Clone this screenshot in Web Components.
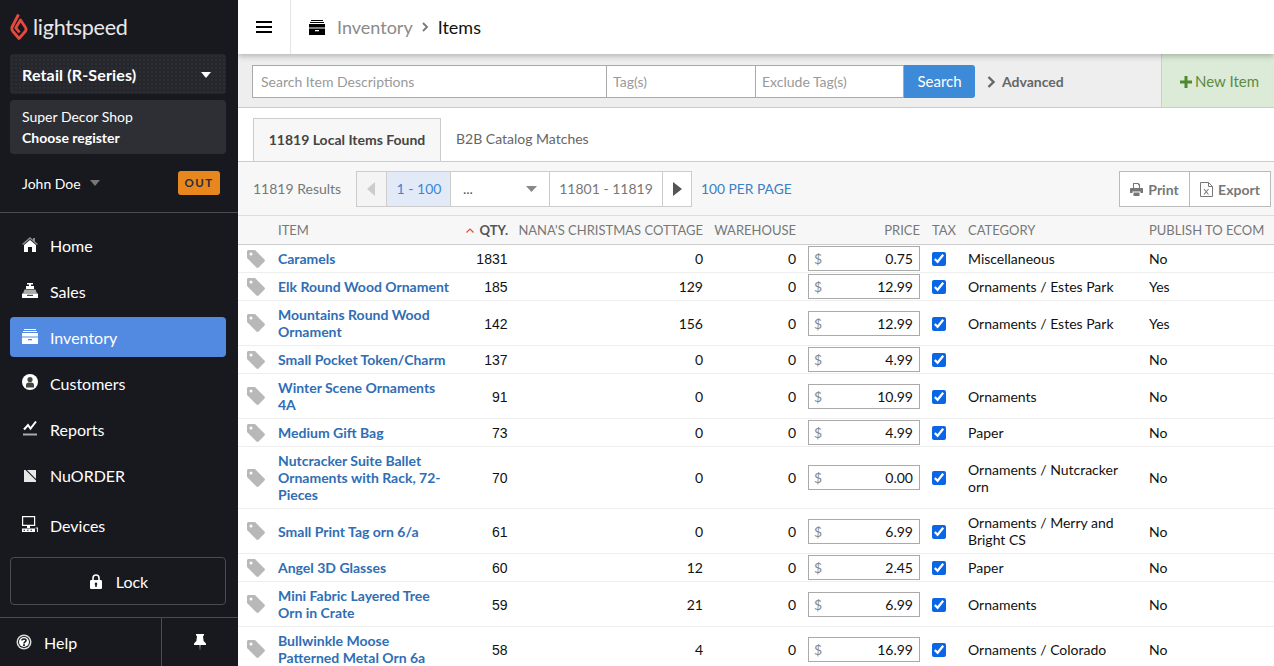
<!DOCTYPE html>
<html lang="en"><head><meta charset="utf-8"><title>Items</title>
<style>
html,body{margin:0;height:666px;overflow:hidden;background:#fff}
body{display:flex;font:14px/17px Lato,"Noto Sans",sans-serif;color:#222}
</style></head><body>
<ls-sidebar></ls-sidebar>
<ls-main></ls-main>
<script>
const I={
home:'<svg width="16" height="15" viewBox="0 0 16 15"><path fill="#8a8a8a" d="M8 0 0 7l1 1 7-6 7 6 1-1-3-2.6V1h-2v1.7z"/><path fill="#fff" d="M8 3 2 8v7h4v-5h4v5h4V8z"/></svg>',
sales:'<svg width="16" height="15" viewBox="0 0 16 15"><path fill="#fff" d="M5 0h6v1.5H9V3h3v3H4V3h3V1.5H5z"/><path fill="#aaa" d="M2.5 6.500h11l1.500 4H1z"/><path fill="#fff" d="M0 10.500h16V15H0z"/><path fill="#18191e" d="M5 11.800h6v1H5z"/></svg>',
inv:'<svg width="16" height="15" viewBox="0 0 16 15"><path fill="currentColor" d="M2 0h12v1H2zM1 2h14v1H1zM0 4h16v3.500H0zM0 8.500h16V15H0z"/><path fill="var(--k,#528ae2)" d="M6 10h4v1.300H6z"/></svg>',
cust:'<svg width="16" height="16" viewBox="0 0 16 16"><circle cx="8" cy="8" r="8" fill="#fff"/><circle cx="8" cy="5.500" r="2.600" fill="#444"/><path fill="#444" d="M4 13.500v-2.500c0-1.500 1.200-2.500 2.500-2.500h3c1.300 0 2.500 1 2.500 2.500v2.500z"/></svg>',
rep:'<svg width="14" height="16" viewBox="0 0 14 16"><path fill="none" stroke="#fff" stroke-width="2" d="M1 9.500 5 5l2.500 3.500L13 1.500"/><path fill="#aaa" d="M0 13.500h14V15.500H0z"/></svg>',
nu:'<svg width="12" height="12" viewBox="0 0 12 12"><path fill="#e8e8e8" d="M0 0h12v12H0z"/><path fill="#18191e" d="M1.500 0H3L12 9v1.500z"/></svg>',
dev:'<svg width="16" height="16" viewBox="0 0 16 16"><path fill="none" stroke="#fff" stroke-width="1.200" d="M.6.600h12v8.800H.6z"/><path fill="#fff" d="M5 10h3v2H5zM0 12.500h13V16H0z"/><path fill="#18191e" d="M1.500 13.800h1.500v1H1.500zM5 13.800h1.500v1H5zM8.500 13.800H10v1H8.500z"/><path fill="none" stroke="#ddd" stroke-width="1.200" d="M13.500 12h2v4"/></svg>',
lock:'<svg width="12" height="15" viewBox="0 0 12 15"><path fill="none" stroke="#fff" stroke-width="1.600" d="M3 7V4a3 3 0 0 1 6 0v3"/><rect y="6" width="12" height="9" rx="1.200" fill="#fff"/><path fill="#18191e" d="M6 8.500a1.300 1.300 0 0 1 .7 2.400l.4 1.800H4.900l.4-1.800A1.300 1.300 0 0 1 6 8.500z"/></svg>',
help:'<svg width="16" height="16" viewBox="0 0 16 16"><circle cx="8" cy="8" r="7.500" fill="#ddd"/><circle cx="8" cy="8" r="6" fill="#18191e"/><circle cx="8" cy="8" r="5" fill="#fff"/><path fill="none" stroke="#18191e" stroke-width="1.600" d="M6 6.500C6 4.500 10 4.500 10 6.500 10 8 8 7.800 8 9.500"/><path fill="#18191e" d="M7.100 10.300h1.800v1.700H7.100z"/></svg>',
pin:'<svg width="12" height="17" viewBox="0 0 12 17"><path fill="#fff" d="M2 0h8v1.500L9 2l.6 5L12 9.500V11H0V9.500L2.400 7 3 2 2 1.500z"/><path fill="#999" d="M5.300 11h1.400L6 17z"/></svg>',
tag:'<svg width="18" height="18" viewBox="0 0 18 18"><path fill="#b8b8b8" d="M0 1.500C0 .7.700 0 1.500 0H8l9.500 9.500c.6.600.6 1.500 0 2.100L11.600 17.500c-.6.600-1.500.6-2.100 0L0 8zM4 2.500a1.500 1.500 0 1 0 0 3 1.500 1.500 0 0 0 0-3z"/></svg>',
print:'<svg width="13" height="13" viewBox="0 0 13 13"><path fill="#777" d="M3 0h5.500L10 1.500V5H9V2.300H8V1H4v4H3zM0 6c0-.6.500-1 1-1h11c.6 0 1 .4 1 1v4h-2.500v-1.500h-8V10H0zM3.500 9.500h6V13h-6z"/></svg>',
xls:'<svg width="13" height="15" viewBox="0 0 13 15"><path fill="none" stroke="#777" d="M.5.500h8l4 4v10H.5zM8.500.500v4h4"/><path fill="none" stroke="#777" stroke-width="1.100" d="M4 7l4.500 5.500M8.500 7 4 12.500"/></svg>'
};
function def(name,css,html,extra){
  customElements.define(name,class extends HTMLElement{
    constructor(){super();this.attachShadow({mode:'open'});}
    connectedCallback(){
      if(this._done)return;this._done=true;
      this.shadowRoot.innerHTML='<style>'+css+'</style>'+(typeof html==='function'?html(this):html);
      if(extra)extra(this);
    }
  });
}
def('ls-nav-item',`:host{display:flex;align-items:center;height:40px;margin:3px 12px 3px 10px;padding-left:12px;border-radius:4px;color:#fff;font-size:16px;--k:#18191e}
:host([active]){background:#528ae2;--k:#528ae2}
.i{width:16px;display:flex;justify-content:center;margin-right:12px;color:#fff}`,
`<span class="i"><slot name="icon"></slot></span><slot></slot>`);
def('ls-sidebar',`:host{display:flex;flex-direction:column;flex:none;width:238px;height:666px;background:#18191e;color:#fff;box-sizing:border-box}
.logo{display:flex;align-items:center;height:54px;padding-left:10px;gap:5px;font-size:21.500px;letter-spacing:-.25px;color:#e9e9e9;box-sizing:border-box}
.ret{margin:0 12px 0 10px;height:40px;background:#26272c radial-gradient(circle,rgba(255,255,255,.07) .6px,transparent .8px) 0 0/4px 4px;border-radius:4px;display:flex;align-items:center;justify-content:space-between;padding:1px 15px 0 12px;font-weight:700;font-size:16px;letter-spacing:.15px;box-sizing:border-box}
.ret i{width:0;height:0;border:5.500px solid transparent;border-top:6px solid #fff;border-bottom:0}
.reg{margin:6px 12px 0 10px;height:54px;background:#2e2f35;border-radius:4px;padding:6px 12px;box-sizing:border-box;font-size:14px;line-height:21px}
.reg b{font-weight:700;display:block}
.user{display:flex;align-items:center;height:58px;padding:0 18px 0 22px;font-size:14px;border-bottom:1px solid #4a4c55}
.user i{width:0;height:0;border:5px solid transparent;border-top:6px solid #777;border-bottom:0;margin-left:9px}
.out{margin-left:auto;background:#e8871e;color:#2c2c33;font-size:11.500px;font-weight:700;letter-spacing:1.500px;width:42px;height:24px;line-height:24px;text-align:center;border-radius:3px}
nav{padding-top:9px;display:flex;flex-direction:column;flex:1}
.lock{margin:8px 12px 0 10px;height:48px;border:1px solid #4a4c55;border-radius:4px;display:flex;align-items:center;justify-content:center;gap:14px;font-size:16px;box-sizing:border-box;padding-left:2px}
.foot{display:flex;height:49px;margin-top:12px;border-top:1px solid #4a4c55;box-sizing:border-box;font-size:16px}
.foot div{display:flex;align-items:center}
.help{width:162px;padding-left:16px;gap:12px;box-sizing:border-box;border-right:1px solid #4a4c55}
.pin{flex:1;justify-content:center}
.dv{margin-top:7px}`,
`<div class="logo"><svg width="18" height="28" viewBox="0 0 18 28"><path fill="none" stroke="#e8493f" stroke-width="2.800" stroke-linejoin="round" d="M8.500 1.500 2.300 13.500Q1 16 3 18.500L9 25.500 15 18.800Q17 16.300 15.200 14L10.500 7 5.800 14.800 9.500 19.500"/></svg><span>lightspeed</span></div>
<div class="ret">Retail (R-Series)<i></i></div>
<div class="reg">Super Decor Shop<b>Choose register</b></div>
<div class="user">John Doe<i></i><span class="out">OUT</span></div>
<nav>
<ls-nav-item><span slot="icon">${I.home}</span>Home</ls-nav-item>
<ls-nav-item><span slot="icon">${I.sales}</span>Sales</ls-nav-item>
<ls-nav-item active><span slot="icon">${I.inv}</span>Inventory</ls-nav-item>
<ls-nav-item><span slot="icon">${I.cust}</span>Customers</ls-nav-item>
<ls-nav-item><span slot="icon">${I.rep}</span>Reports</ls-nav-item>
<ls-nav-item><span slot="icon">${I.nu}</span>NuORDER</ls-nav-item>
<ls-nav-item class="dv"><span slot="icon">${I.dev}</span>Devices</ls-nav-item>
</nav>
<div class="lock">${I.lock}<span>Lock</span></div>
<div class="foot"><div class="help">${I.help}<span>Help</span></div><div class="pin">${I.pin}</div></div>`);
def('ls-topbar',`:host{display:flex;align-items:center;height:54px;background:#fff;box-shadow:0 2px 6px rgba(0,0,0,.25);position:relative;z-index:2;font-size:18px;color:#8a8a8a;flex:none}
.b{width:52px;height:54px;border-right:1px solid #e4e4e4;display:flex;align-items:center;justify-content:center;color:#000}
.c{display:flex;align-items:center;padding-left:18px;color:#000;--k:#fff}
.t{margin-left:12px}.s{margin:0 9px;display:flex}.e{color:#111}`,
`<div class="b"><svg width="16" height="12" viewBox="0 0 16 12"><path fill="#000" d="M0 0h16v2H0zM0 5h16v2H0zM0 10h16v2H0z"/></svg></div>
<div class="c"><span style="display:flex">${I.inv}</span><span class="t" style="color:#8a8a8a">Inventory</span>
<span class="s"><svg width="7" height="10" viewBox="0 0 7 10"><path fill="none" stroke="#777" stroke-width="1.800" d="M1 1l4 4-4 4"/></svg></span><span class="e">Items</span></div>`);
def('ls-searchbar',`:host{display:flex;height:54px;background:#eee;border-bottom:1px solid #ccc;box-sizing:border-box;flex:none;font-size:14px}
.f{display:flex;align-items:center;flex:1;padding:2px 0 0 14px}
.in{height:33px;box-sizing:border-box;border:1px solid #aaa;background:#fff;color:#999;display:flex;align-items:center;padding-left:8px}
.in+.in{margin-left:-1px;padding-left:6px}
.btn{width:71px;height:33px;background:#3d8bd8;color:#fff;display:flex;align-items:center;justify-content:center;border-radius:0 3px 3px 0;font-size:15px}
.adv{margin-left:12px;display:flex;align-items:center;gap:6px;font-weight:700;color:#666}
.new{width:113px;background:#dcebd7;border-left:1px solid #c4d6bd;color:#5c8a45;box-sizing:border-box;display:flex;align-items:center;justify-content:center;gap:3px;font-size:15px;padding:2px 0 0 3px}`,
`<div class="f"><div class="in" style="width:355px">Search Item Descriptions</div><div class="in" style="width:150px">Tag(s)</div><div class="in" style="width:149px">Exclude Tag(s)</div><div class="btn">Search</div>
<div class="adv"><svg width="9" height="12" viewBox="0 0 9 12"><path fill="none" stroke="#666" stroke-width="2.400" d="M1.500 1l5 5-5 5"/></svg>Advanced</div></div>
<div class="new"><svg width="12" height="12" viewBox="0 0 12 12"><path fill="#4f8a2f" d="M4.500 0h3v4.500H12v3H7.500V12h-3V7.500H0v-3h4.500z"/></svg>New Item</div>`);
def('ls-tabs',`:host{display:flex;height:54px;padding:10px 0 0 15px;box-sizing:border-box;border-bottom:1px solid #ccc;background:#fff;align-items:stretch;flex:none}
.a{width:188px;box-sizing:border-box;background:#f7f7f7;border:1px solid #ccc;border-bottom:0;font-weight:700;color:#444;display:flex;align-items:center;justify-content:center;padding-bottom:2px}
.b{padding:0 0 2px 15px;display:flex;align-items:center;color:#666}`,
`<div class="a">11819 Local Items Found</div><div class="b">B2B Catalog Matches</div>`);
def('ls-toolbar',`:host{display:flex;align-items:center;height:54px;background:#f7f7f7;border-bottom:1px solid #ddd;box-sizing:border-box;padding-left:15px;color:#777;flex:none}
.r{width:103px}
.p{display:flex;height:36px;border:1px solid #ccc;box-sizing:border-box;background:#fff;color:#777}
.p>div{display:flex;align-items:center;justify-content:center;border-right:1px solid #ccc;box-sizing:border-box}
.p>div:last-child{border:0}
.cur{width:64px;background:#e1eaf6;color:#3b86d6;padding-left:1px}
.sel{width:99px;justify-content:space-between!important;padding:0 12px 0 12px;color:#555}
.per{margin-left:9px;color:#3a80c4;font-size:13.800px}
.ex{margin-left:auto;margin-right:3px;display:flex;height:36px;border:1px solid #bbb;box-sizing:border-box;background:#fff;font-weight:700;color:#777}
.ex div{display:flex;align-items:center;gap:5px;justify-content:center;box-sizing:border-box;padding-top:1px}`,
`<div class="r">11819 Results</div>
<div class="p"><div style="width:30px;background:#f4f4f4"><svg width="9" height="14" viewBox="0 0 9 14"><path fill="#ccc" d="M8 0v14L0 7z"/></svg></div><div class="cur">1 - 100</div><div class="sel"><span>...</span><svg width="11" height="6" viewBox="0 0 11 6"><path fill="#888" d="M0 0h11L5.500 6z"/></svg></div><div style="width:113px">11801 - 11819</div><div style="width:28px"><svg width="9" height="14" viewBox="0 0 9 14"><path fill="#555" d="M0 0v14l9-7z"/></svg></div></div>
<div class="per">100 PER PAGE</div>
<div class="ex"><div style="width:70px;border-right:1px solid #bbb">${I.print}Print</div><div style="width:80px">${I.xls}Export</div></div>`);
const GRID='display:grid;grid-template-columns:40px 176px 54px 195px 93px 124px 48px 181px 125px;align-items:center;';
def('ls-head',`:host{${GRID}height:29px;background:#f7f7f7;border-bottom:1px solid #ccc;box-sizing:border-box;color:#777;flex:none;font-size:13px;white-space:nowrap}
.q{color:#555;font-weight:700;display:flex;justify-content:flex-end;align-items:center;gap:6px}.r{text-align:right}.x{padding-left:12px}`,
`<span></span><span>ITEM</span><span class="q"><svg width="8" height="5" viewBox="0 0 8 5"><path fill="none" stroke="#e8493f" stroke-width="1.200" d="M.5 4.500 4 1l3.500 3.500"/></svg>QTY.</span><span class="r">NANA'S CHRISTMAS COTTAGE</span><span class="r">WAREHOUSE</span><span class="r">PRICE</span><span class="x">TAX</span><span>CATEGORY</span><span>PUBLISH TO ECOM</span>`);
def('ls-row',`:host{${GRID}min-height:27px;border-bottom:1px solid #eee;color:#111;flex:none}
.tag{padding-left:9px;display:flex}
.n{font-weight:700;color:#2f6eb5;padding:5px 2px 5px 0}
.q{text-align:right;font-family:"Liberation Sans",sans-serif;padding:2px .5px 0 0}
.r{text-align:right}
.pr{display:flex;justify-content:space-between;align-items:center;margin-left:12px;width:112px;height:25px;box-sizing:border-box;border:1px solid #aaa;padding:0 6px 0 5px;background:#fff}
.pr i{font-style:normal;color:#888}
.x{padding:1px 0 0 12px;display:flex}
input{margin:0;width:14px;height:14px;accent-color:#0a66e4}
.c{padding:5px 15px 5px 0}`,
h=>{const g=a=>h.getAttribute(a)||'';return `<span class="tag">${I.tag}</span><span class="n">${g('n')}</span><span class="q">${g('q')}</span><span class="r">${g('s')}</span><span class="r">0</span><span class="pr"><i>$</i><span>${g('p')}</span></span><span class="x"><input type="checkbox" checked tabindex="-1"></span><span class="c">${g('c')}</span><span>${g('e')}</span>`});
def('ls-main',`:host{display:flex;flex-direction:column;flex:1;min-width:0;height:666px;overflow:hidden}`,
`<ls-topbar></ls-topbar><ls-searchbar></ls-searchbar><ls-tabs></ls-tabs><ls-toolbar></ls-toolbar><ls-head></ls-head><slot></slot>`,
h=>{const d=[
['Caramels','1831','0','0.75','Miscellaneous','No'],
['Elk Round Wood Ornament','185','129','12.99','Ornaments / Estes Park','Yes'],
['Mountains Round Wood Ornament','142','156','12.99','Ornaments / Estes Park','Yes'],
['Small Pocket Token/Charm','137','0','4.99','','No'],
['Winter Scene Ornaments 4A','91','0','10.99','Ornaments','No'],
['Medium Gift Bag','73','0','4.99','Paper','No'],
['Nutcracker Suite Ballet Ornaments with Rack, 72-Pieces','70','0','0.00','Ornaments / Nutcracker orn','No'],
['Small Print Tag orn 6/a','61','0','6.99','Ornaments / Merry and Bright CS','No'],
['Angel 3D Glasses','60','12','2.45','Paper','No'],
['Mini Fabric Layered Tree Orn in Crate','59','21','6.99','Ornaments','No'],
['Bullwinkle Moose Patterned Metal Orn 6a','58','4','16.99','Ornaments / Colorado','No']];
for(const r of d){const e=document.createElement('ls-row');['n','q','s','p','c','e'].forEach((k,i)=>e.setAttribute(k,r[i]));h.appendChild(e);}});
</script>
</body></html>
